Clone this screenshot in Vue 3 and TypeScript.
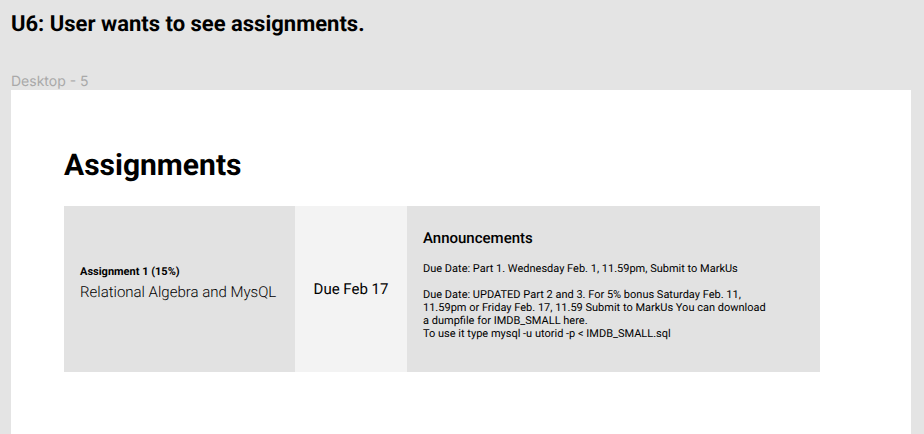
<script setup lang="ts">
interface Assignment {
  name: string
  topic: string
  due: string
  notes: string[]
}

const assignment: Assignment = {
  name: 'Assignment 1 (15%)',
  topic: 'Relational Algebra and MysQL',
  due: 'Due Feb 17',
  notes: [
    'Due Date: Part 1. Wednesday Feb. 1, 11.59pm, Submit to MarkUs',
    'Due Date: UPDATED Part 2 and 3. For 5% bonus Saturday Feb. 11,\n11.59pm or Friday Feb. 17, 11.59 Submit to MarkUs You can download\na dumpfile for IMDB_SMALL here.\nTo use it type mysql -u utorid -p < IMDB_SMALL.sql',
  ],
}
</script>

<template>
  <main class="canvas">
    <h1 class="story">U6: User wants to see assignments.</h1>
    <p class="frame-label">Desktop - 5</p>
    <section class="frame">
      <h2 class="heading">Assignments</h2>
      <article class="assignment">
        <div class="summary">
          <h3 class="name">{{ assignment.name }}</h3>
          <p class="topic">{{ assignment.topic }}</p>
        </div>
        <div class="due">{{ assignment.due }}</div>
        <div class="announcements">
          <h3 class="subheading">Announcements</h3>
          <p v-for="note in assignment.notes" :key="note" class="note">{{ note }}</p>
        </div>
      </article>
    </section>
  </main>
</template>

<style>
body {
  margin: 0;
  background: #e4e4e4;
}
</style>

<style scoped>
.canvas {
  display: flex;
  flex-direction: column;
  box-sizing: border-box;
  min-height: 100vh;
  padding: 11px 13px 0 11px;
  font-family: Roboto, "Liberation Sans", sans-serif;
  color: #000;
  text-rendering: geometricPrecision;
}

h1,
h2,
h3,
p {
  margin: 0;
}

.story {
  font-size: 22px;
  line-height: 28px;
  font-weight: 700;
}

.frame-label {
  margin-top: 35px;
  font-family: Inter, Roboto, sans-serif;
  font-size: 14px;
  line-height: 16px;
  color: #a9a9a9;
}

.frame {
  flex: 1;
  padding: 56px 91px 62px 53px;
  background: #fff;
}

.heading {
  font-size: 30px;
  line-height: 40px;
  font-weight: 700;
}

.assignment {
  display: grid;
  grid-template-columns: 231fr 112fr 413fr;
  margin-top: 20px;
  background: #e2e2e2;
}

.summary {
  display: flex;
  flex-direction: column;
  justify-content: center;
  padding: 0 16px 12px;
  white-space: nowrap;
}

.name {
  font-size: 11px;
  line-height: 14px;
  font-weight: 700;
}

.topic {
  margin-top: 4px;
  font-size: 15px;
  line-height: 18px;
  font-weight: 300;
}

.due {
  display: flex;
  align-items: center;
  justify-content: center;
  background: #f3f3f3;
  font-size: 15px;
  white-space: nowrap;
}

.announcements {
  padding: 23px 16px 32px;
}

.subheading {
  margin-bottom: 15px;
  font-size: 15px;
  line-height: 18px;
  font-weight: 500;
}

.note {
  font-size: 11px;
  line-height: 13px;
  white-space: pre-line;
}

.note + .note {
  margin-top: 13px;
}
</style>
